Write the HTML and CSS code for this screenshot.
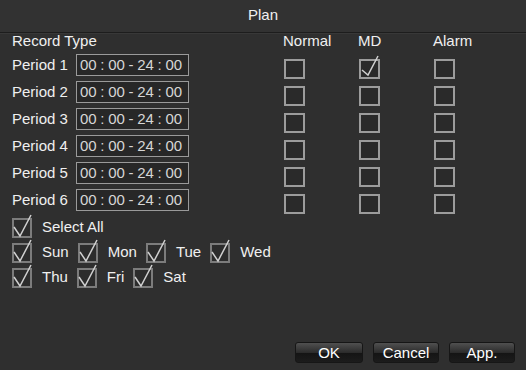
FILE: index.html
```html
<!DOCTYPE html>
<html lang="en">

<head>
    <meta charset="UTF-8">
    <meta name="viewport" content="width=device-width, initial-scale=1.0">
    <title>Plan</title>
    <link rel="stylesheet" href="styles.css">
</head>

<body>

    <div class="dialog">
        <!-- Title Bar -->
        <div class="title">Plan</div>

        <!-- Record Type Table -->
        <div class="plan">
            <div class="head-row">
                <span class="head-label">Record Type</span>
                <span class="head-col">Normal</span>
                <span class="head-col">MD</span>
                <span class="head-col">Alarm</span>
            </div>

            <div class="period-row">
                <span class="period-label">Period 1</span>
                <span class="time-box">00 : 00 - 24 : 00</span>
                <span class="cell"><span class="box"></span></span>
                <span class="cell"><span class="box checked"><svg viewBox="0 0 20 20"><polyline points="3,11 9,16 19,-3"/></svg></span></span>
                <span class="cell"><span class="box"></span></span>
            </div>
            <div class="period-row">
                <span class="period-label">Period 2</span>
                <span class="time-box">00 : 00 - 24 : 00</span>
                <span class="cell"><span class="box"></span></span>
                <span class="cell"><span class="box"></span></span>
                <span class="cell"><span class="box"></span></span>
            </div>
            <div class="period-row">
                <span class="period-label">Period 3</span>
                <span class="time-box">00 : 00 - 24 : 00</span>
                <span class="cell"><span class="box"></span></span>
                <span class="cell"><span class="box"></span></span>
                <span class="cell"><span class="box"></span></span>
            </div>
            <div class="period-row">
                <span class="period-label">Period 4</span>
                <span class="time-box">00 : 00 - 24 : 00</span>
                <span class="cell"><span class="box"></span></span>
                <span class="cell"><span class="box"></span></span>
                <span class="cell"><span class="box"></span></span>
            </div>
            <div class="period-row">
                <span class="period-label">Period 5</span>
                <span class="time-box">00 : 00 - 24 : 00</span>
                <span class="cell"><span class="box"></span></span>
                <span class="cell"><span class="box"></span></span>
                <span class="cell"><span class="box"></span></span>
            </div>
            <div class="period-row">
                <span class="period-label">Period 6</span>
                <span class="time-box">00 : 00 - 24 : 00</span>
                <span class="cell"><span class="box"></span></span>
                <span class="cell"><span class="box"></span></span>
                <span class="cell"><span class="box"></span></span>
            </div>
        </div>

        <!-- Day Selection -->
        <div class="days">
            <div class="day-row">
                <span class="day"><span class="box day-box"><svg viewBox="0 0 20 20"><polyline points="2,9 8,18 19,-3"/></svg></span><span class="day-label">Select All</span></span>
            </div>
            <div class="day-row">
                <span class="day"><span class="box day-box"><svg viewBox="0 0 20 20"><polyline points="2,9 8,18 19,-3"/></svg></span><span class="day-label">Sun</span></span>
                <span class="day"><span class="box day-box"><svg viewBox="0 0 20 20"><polyline points="2,9 8,18 19,-3"/></svg></span><span class="day-label">Mon</span></span>
                <span class="day"><span class="box day-box"><svg viewBox="0 0 20 20"><polyline points="2,9 8,18 19,-3"/></svg></span><span class="day-label">Tue</span></span>
                <span class="day"><span class="box day-box"><svg viewBox="0 0 20 20"><polyline points="2,9 8,18 19,-3"/></svg></span><span class="day-label">Wed</span></span>
            </div>
            <div class="day-row">
                <span class="day"><span class="box day-box"><svg viewBox="0 0 20 20"><polyline points="2,9 8,18 19,-3"/></svg></span><span class="day-label">Thu</span></span>
                <span class="day"><span class="box day-box"><svg viewBox="0 0 20 20"><polyline points="2,9 8,18 19,-3"/></svg></span><span class="day-label">Fri</span></span>
                <span class="day"><span class="box day-box"><svg viewBox="0 0 20 20"><polyline points="2,9 8,18 19,-3"/></svg></span><span class="day-label">Sat</span></span>
            </div>
        </div>

        <!-- Buttons -->
        <div class="footer">
            <button class="button ok">OK</button>
            <button class="button">Cancel</button>
            <button class="button">App.</button>
        </div>
    </div>

</body>

</html>
```

FILE: styles.css
```css
/* General Reset */
* {
    margin: 0;
    padding: 0;
    box-sizing: border-box;
    font-family: "Liberation Sans", Arial, sans-serif;
}

body {
    background-color: #2f2f2f;
    color: #f0f0f0;
    font-size: 15px;
}

.dialog {
    height: 370px;
    display: flex;
    flex-direction: column;
}

/* Title Bar */
.title {
    height: 33px;
    line-height: 30px;
    text-align: center;
    background-color: #323232;
    border-bottom: 1px solid #1d1d1d;
    box-shadow: 0 1px 0 #383838;
}

/* Record Type Table */
.plan {
    padding-left: 12px;
}

.head-row {
    display: flex;
    height: 21px;
    line-height: 15px;
}

.head-label {
    width: 271px;
}

.head-col {
    width: 75px;
}

.period-row {
    display: flex;
    height: 27px;
}

.period-label {
    width: 64px;
    line-height: 22px;
}

.time-box {
    width: 113px;
    height: 22px;
    line-height: 20px;
    padding-left: 3px;
    border: 1px solid #9a9a9a;
    background-color: #272727;
    color: #d6d6d6;
    word-spacing: -0.5px;
    margin-right: 95px;
}

.cell {
    width: 75px;
    padding-top: 5px;
}

/* Checkboxes */
.box {
    position: relative;
    display: block;
    width: 21px;
    height: 20px;
    border: 2px solid #9c9c9c;
    background-color: #2a2a2a;
}

.box svg {
    position: absolute;
    left: -2px;
    top: -2px;
    width: 20px;
    height: 20px;
    overflow: visible;
    fill: none;
    stroke: #d0d0d0;
    stroke-width: 1.5;
}

/* Day Selection */
.days {
    padding-left: 12px;
    margin-top: 2px;
}

.day-row {
    display: flex;
    height: 25px;
    gap: 9px;
}

.day {
    display: flex;
    align-items: flex-start;
}

.day-box {
    width: 20px;
    border-color: #7c7c7c;
    background-color: #2c2c2c;
}

.day-label {
    margin-left: 10px;
    line-height: 17px;
}

/* Buttons */
.footer {
    margin-top: auto;
    display: flex;
    justify-content: flex-end;
    gap: 10px;
    padding: 0 11px 7px 0;
}

.button {
    width: 66px;
    height: 21px;
    font-size: 15px;
    color: #fff;
    border: 1px solid #161616;
    border-radius: 3px;
    background: linear-gradient(#505050, #2c2c2c 50%, #141414 52%, #1c1c1c);
    cursor: pointer;
}

.button.ok {
    width: 68px;
}
```
